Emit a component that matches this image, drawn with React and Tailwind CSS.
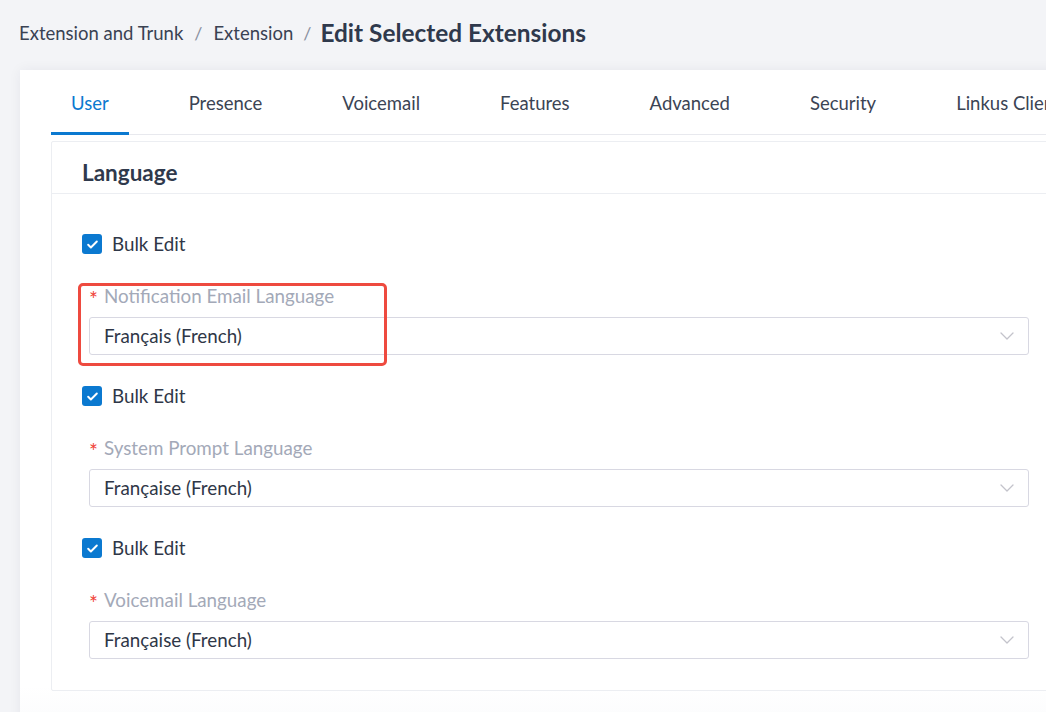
import React from "react";

const tabs = ["User", "Presence", "Voicemail", "Features", "Advanced", "Security", "Linkus Client"];

const CheckIcon = () => (
  <svg className="w-[13px] h-[13px] text-white" viewBox="0 0 24 24" fill="none">
    <path d="M4 12.5l5 5L20 6.5" stroke="currentColor" strokeWidth="3.6" strokeLinecap="round" strokeLinejoin="round" />
  </svg>
);

const Chevron = () => (
  <svg className="w-[14px] h-[8px]" viewBox="0 0 14 8" fill="none">
    <path d="M1 1l6 6 6-6" stroke="#c3c3cb" strokeWidth="1.3" strokeLinecap="round" strokeLinejoin="round" />
  </svg>
);

const LanguageField = ({ label, value, first, highlight }) => {
  return (
    <div className={first ? "" : "mt-[31px]"}>
      <div className="flex items-center h-5">
        <div className="w-5 h-5 rounded-[3px] bg-[#0b79d0] flex items-center justify-center">
          <CheckIcon />
        </div>
        <span className="ml-[10px] text-[18.8px] leading-[22px] text-[#2f3747]">Bulk Edit</span>
      </div>

      <div className="relative ml-[7px]">
        {highlight && (
          <div className="absolute left-[-11px] top-[-2px] w-[309px] h-[83px] border-[3px] border-[#ee4a3f] rounded-[5px] pointer-events-none" />
        )}
        <div className="mt-[31px] h-[22px] flex items-center leading-[22px] overflow-visible">
          <span className="text-[#f04438] text-[21px] leading-[22px] mr-[6px] mt-[5px]">*</span>
          <span className="text-[18.8px] text-[#a3a9b8]">{label}</span>
        </div>
        <div className="mt-[10px] h-[38px] w-[940px] border border-[#d8d8e2] rounded-[3px] flex items-center justify-between pl-[14px] pr-[14px]">
          <span className="text-[18.8px] text-[#2f3747]">{value}</span>
          <Chevron />
        </div>
      </div>
    </div>
  );
};

export default function App() {
  return (
    <div
      className="w-full h-[712px] overflow-hidden bg-[#f3f4f7]"
      style={{ fontFamily: '"Source Sans Pro", Lato, "Open Sans", sans-serif' }}
    >
      <div className="h-[70px] flex items-center pl-[19px] pb-[3px] whitespace-nowrap">
        <span className="text-[18.5px] text-[#3a4253]">Extension and Trunk</span>
        <span className="text-[18px] text-[#8a90a0] mx-[11px]">/</span>
        <span className="text-[18.5px] text-[#3a4253]">Extension</span>
        <span className="text-[18px] text-[#8a90a0] ml-[10px] mr-[9px]">/</span>
        <span className="text-[24.4px] font-bold text-[#2f394c]">Edit Selected Extensions</span>
      </div>

      <div className="ml-[20px] w-[1100px] h-[700px] bg-gradient-to-b from-white from-[88%] to-[#f6f7f9] shadow-[0_0_12px_rgba(30,40,60,0.06)] pl-[31px]">
        <div className="flex gap-10 border-b border-[#e8e9ee] whitespace-nowrap">
          {tabs.map((t, i) => (
            <div
              key={t}
              className={
                "px-5 pt-[22px] pb-[18px] -mb-px border-b-[3px] text-[18.5px] leading-[22px] " +
                (i === 0 ? "border-[#0b79d0] text-[#0b79d0]" : "border-transparent text-[#3b4454]")
              }
            >
              {t}
            </div>
          ))}
        </div>

        <div className="mt-[6px] border border-[#eceef2] rounded-[2px] bg-white">
          <div className="pl-[30px] pt-[20px] pb-[9px] border-b border-[#eceef2]">
            <h2 className="text-[22.5px] leading-[22px] font-bold text-[#2f394c]">Language</h2>
          </div>
          <div className="pl-[30px] pt-[40px] pb-[31px]">
            <LanguageField first highlight label="Notification Email Language" value="Français (French)" />
            <LanguageField label="System Prompt Language" value="Française (French)" />
            <LanguageField label="Voicemail Language" value="Française (French)" />
          </div>
        </div>
      </div>
    </div>
  );
}
